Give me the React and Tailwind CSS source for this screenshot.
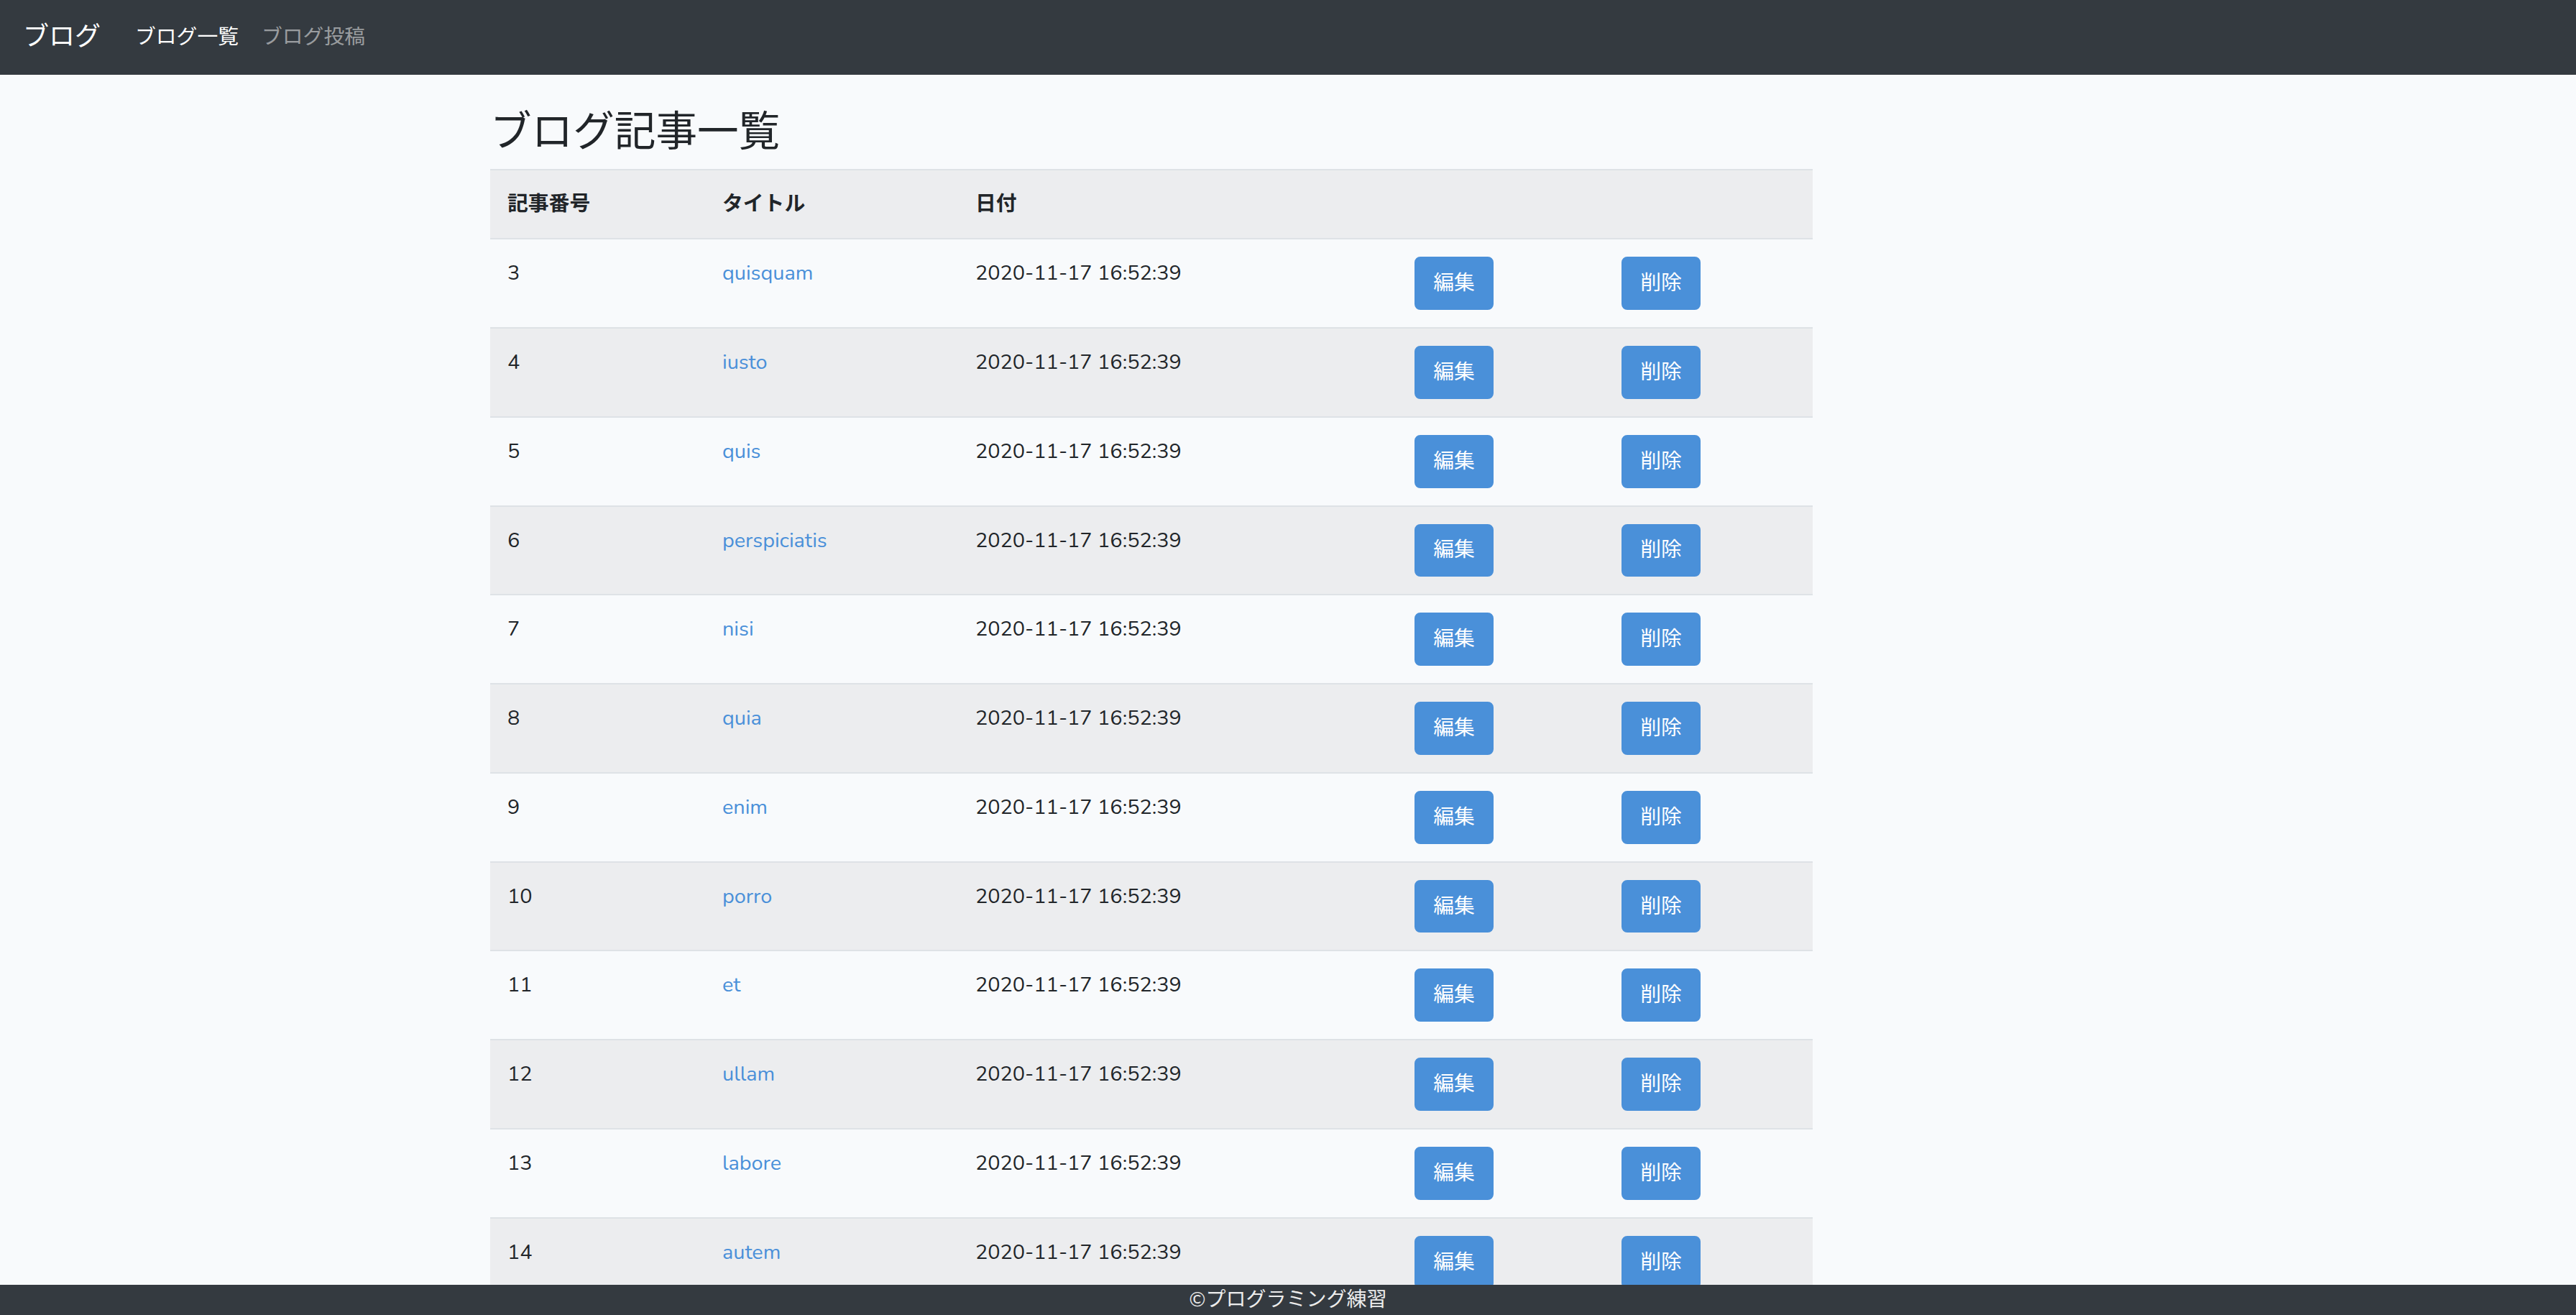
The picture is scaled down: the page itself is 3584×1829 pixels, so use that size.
const POSTS = [
  { id: 3, title: "quisquam" },
  { id: 4, title: "iusto" },
  { id: 5, title: "quis" },
  { id: 6, title: "perspiciatis" },
  { id: 7, title: "nisi" },
  { id: 8, title: "quia" },
  { id: 9, title: "enim" },
  { id: 10, title: "porro" },
  { id: 11, title: "et" },
  { id: 12, title: "ullam" },
  { id: 13, title: "labore" },
  { id: 14, title: "autem" },
];

const FONT = { fontFamily: 'Nunito, Lato, "Noto Sans CJK JP", sans-serif' };

function Btn({ children }) {
  return (
    <button className="h-[73.8px] w-[110px] rounded-[8px] border-2 border-[#4a90d9] bg-[#4a90d9] text-[28.8px] leading-[46px] text-white">
      {children}
    </button>
  );
}

export default function App() {
  return (
    <div className="min-h-screen bg-[#f8fafc] text-[#212529]" style={FONT}>
      {/* Navbar */}
      <nav className="flex h-[104px] items-center bg-[#343a40] px-[32px]">
        <a className="mr-[32px] text-[36px] leading-[1.5] text-white">ブログ</a>
        <a className="px-[16px] text-[28.8px] leading-[1.6] text-white">ブログ一覧</a>
        <a className="px-[16px] text-[28.8px] leading-[1.6] text-white/50">ブログ投稿</a>
      </nav>

      {/* Content */}
      <main className="mx-auto w-[2280px] px-[30px] pt-[46px]">
        <h2 className="mb-[16px] text-[57.6px] font-normal leading-[1.2]">ブログ記事一覧</h2>
        <table className="w-[1840px] table-fixed border-collapse text-[28.8px] leading-[46px]">
          <colgroup>
            <col className="w-[299px]" />
            <col className="w-[352px]" />
            <col className="w-[611px]" />
            <col className="w-[288px]" />
            <col className="w-[290px]" />
          </colgroup>
          <thead>
            <tr className="bg-[#ecedef]">
              <th className="border-y-2 border-[#dee2e6] p-[24px] text-left align-top font-bold">記事番号</th>
              <th className="border-y-2 border-[#dee2e6] p-[24px] text-left align-top font-bold">タイトル</th>
              <th className="border-y-2 border-[#dee2e6] p-[24px] text-left align-top font-bold">日付</th>
              <th className="border-y-2 border-[#dee2e6] p-[24px]"></th>
              <th className="border-y-2 border-[#dee2e6] p-[24px]"></th>
            </tr>
          </thead>
          <tbody>
            {POSTS.map((p, i) => (
              <tr key={p.id} className={i % 2 === 1 ? "bg-[#ecedef]" : ""}>
                <td className="border-t-2 border-[#dee2e6] p-[24px] align-top">{p.id}</td>
                <td className="border-t-2 border-[#dee2e6] p-[24px] align-top">
                  <a className="text-[#4a90d9]">{p.title}</a>
                </td>
                <td className="border-t-2 border-[#dee2e6] p-[24px] align-top">2020-11-17 16:52:39</td>
                <td className="border-t-2 border-[#dee2e6] p-[24px] align-top">
                  <Btn>編集</Btn>
                </td>
                <td className="border-t-2 border-[#dee2e6] p-[24px] align-top">
                  <Btn>削除</Btn>
                </td>
              </tr>
            ))}
          </tbody>
        </table>
      </main>

      {/* Footer */}
      <footer className="fixed inset-x-0 bottom-0 h-[42px] bg-[#343a40] text-center text-[28px] leading-[42px] text-[#ececec]">
        ©プログラミング練習
      </footer>
    </div>
  );
}
